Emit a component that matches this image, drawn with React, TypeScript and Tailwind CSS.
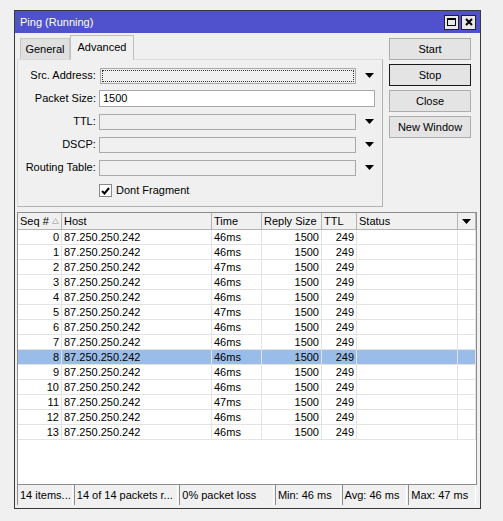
import React from "react";

const font = { fontFamily: '"Liberation Sans", Arial, sans-serif' };

const rows = [
  46, 46, 47, 46, 46, 47, 46, 46, 46, 46, 46, 47, 46, 46,
];

function Arrow() {
  return (
    <svg width="9" height="5" viewBox="0 0 9 5" className="block">
      <path d="M0 0h9L4.5 5z" fill="#000" />
    </svg>
  );
}

function FormRow({
  label,
  value,
  wide,
  focus,
}: {
  label: string;
  value?: string;
  wide?: boolean;
  focus?: boolean;
}) {
  return (
    <div className="flex items-center h-[17px]">
      <div className="w-[78px] text-right leading-none">{label}</div>
      {wide ? (
        <div className="ml-[3px] w-[276px] h-[17px] bg-white border border-[#a9a9a9] flex items-center pl-[3px] leading-none">
          {value}
        </div>
      ) : (
        <>
          <div
            className={
              focus
                ? "ml-[4px] w-[257px] h-[16px] bg-[#f0f0f0] border border-[#a9a9a9] p-px"
                : "ml-[3px] w-[258px] h-[16px] bg-[#f0f0f0] border border-[#a9a9a9]"
            }
          >
            {focus && (
              <div className="w-full h-full border border-dotted border-[#333]" />
            )}
          </div>
          <div className="w-[26px] flex justify-center">
            <Arrow />
          </div>
        </>
      )}
    </div>
  );
}

function Btn({ label, def }: { label: string; def?: boolean }) {
  return (
    <div
      className={
        def
          ? "w-[82px] h-[22px] border border-[#1a1a1a] bg-[#e4e4e4] flex items-center justify-center leading-none"
          : "w-[82px] h-[22px] border border-[#adadad] bg-[#e4e4e4] flex items-center justify-center leading-none"
      }
    >
      {label}
    </div>
  );
}

const cols = [
  "w-[44px]",
  "w-[150px]",
  "w-[50px]",
  "w-[60px]",
  "w-[35px]",
  "w-[101px]",
  "w-[18px]",
];

export default function App() {
  return (
    <div
      className="w-[503px] h-[521px] bg-[#f0f0f0] pl-[14px] pt-[10px] text-[11px] text-black"
      style={font}
    >
      <div className="w-[467px] h-[499px] border border-[#3a3a3a] bg-[#f0f0f0] flex flex-col">
        {/* title bar */}
        <div className="h-[22px] bg-[#4f52cc] flex items-center pl-[5px] pr-[4px]">
          <span className="text-white text-[11px] leading-none">Ping (Running)</span>
          <div className="ml-auto flex gap-[2px]">
            <div className="w-[15px] h-[15px] bg-[#e8e8e8] border border-[#222] flex items-center justify-center">
              <div className="w-[9px] h-[8px] border border-black border-t-2" />
            </div>
            <div className="w-[15px] h-[15px] bg-[#e8e8e8] border border-[#222] flex items-center justify-center">
              <svg width="8" height="8" viewBox="0 0 8 8">
                <path d="M1 1l6 6M7 1L1 7" stroke="#000" strokeWidth="2" />
              </svg>
            </div>
          </div>
        </div>

        {/* body */}
        <div className="flex-1 flex flex-col pl-[2px] pr-[3px] pb-[3px]">
          <div className="flex">
            <div className="w-[366px] flex flex-col pt-[2px]">
              <div className="flex items-end h-[25px] pl-[3px] relative z-10 -mb-px">
                <div className="w-[50px] h-[21px] bg-[#e0e0e0] border border-[#c8c8c8] border-b-0 flex items-center justify-center leading-none mb-px">
                  General
                </div>
                <div className="w-[64px] h-[25px] bg-[#f0f0f0] border border-[#c0c0c0] border-b-0 flex items-center justify-center leading-none pb-[2px]">
                  Advanced
                </div>
              </div>
              <div className="h-[148px] border border-[#b4b4b4] border-t-[#dcdcdc] border-l-[#dcdcdc] pt-[7px] flex flex-col gap-[6px]">
                <FormRow label="Src. Address:" focus />
                <FormRow label="Packet Size:" value="1500" wide />
                <FormRow label="TTL:" />
                <FormRow label="DSCP:" />
                <FormRow label="Routing Table:" />
                <div className="flex items-center mt-[2px] pl-[81px] h-[13px]">
                  <div className="w-[13px] h-[13px] bg-white border border-[#8a8a8a] flex items-center justify-center">
                    <svg width="9" height="8" viewBox="0 0 9 8">
                      <path d="M1 4l2.5 2.5L8 1" stroke="#000" strokeWidth="2" fill="none" />
                    </svg>
                  </div>
                  <span className="ml-[4px] leading-none">Dont Fragment</span>
                </div>
              </div>
            </div>
            <div className="ml-[6px] pt-[5px] flex flex-col gap-[4px]">
              <Btn label="Start" />
              <Btn label="Stop" def />
              <Btn label="Close" />
              <Btn label="New Window" />
            </div>
          </div>

          {/* table */}
          <div className="mt-[5px] w-[460px] flex-1 border border-[#8c8c8c] bg-white flex flex-col">
            <div className="h-[17px] flex bg-[#f0f0f0] border-b border-[#b4b4b4]">
              {["Seq #", "Host", "Time", "Reply Size", "TTL", "Status", ""].map((h, i) => (
                <div
                  key={i}
                  className={`${cols[i]} h-full border-r border-[#b4b4b4] flex items-center pl-[2px] leading-none`}
                >
                  {h}
                  {i === 0 && (
                    <svg width="7" height="6" viewBox="0 0 7 6" className="ml-[3px]">
                      <path d="M3.5 0.5L6.5 5.5H0.5z" fill="none" stroke="#b8b8b8" />
                    </svg>
                  )}
                  {i === 6 && (
                    <div className="ml-[2px]">
                      <Arrow />
                    </div>
                  )}
                </div>
              ))}
            </div>
            {rows.map((t, i) => {
              const cells = [
                String(i),
                "87.250.250.242",
                `${t}ms`,
                "1500",
                "249",
                "",
                "",
              ];
              return (
                <div
                  key={i}
                  className={
                    i === 8
                      ? "h-[15px] flex bg-[#99bde8] border-b border-[#e3e3e3]"
                      : "h-[15px] flex border-b border-[#e3e3e3]"
                  }
                >
                  {cells.map((c, j) => (
                    <div
                      key={j}
                      className={`${cols[j]} h-full border-r border-[#e3e3e3] flex items-center leading-none ${
                        j === 0 || j === 3 || j === 4
                          ? "justify-end pr-[2px]"
                          : "pl-[2px]"
                      }`}
                    >
                      {c}
                    </div>
                  ))}
                </div>
              );
            })}
          </div>

          {/* status bar */}
          <div className="h-[20px] flex items-stretch gap-[1px] mr-[1px]">
            {[
              ["14 items...", "w-[56px]"],
              ["14 of 14 packets r...", "w-[105px]"],
              ["0% packet loss", "w-[95px]"],
              ["Min: 46 ms", "w-[66px]"],
              ["Avg: 46 ms", "w-[66px]"],
              ["Max: 47 ms", "w-[68px]"],
            ].map(([txt, w]) => (
              <div
                key={txt}
                className={`${w} border-l border-[#8c8c8c] border-r border-r-white flex items-center pl-[2px] leading-none whitespace-nowrap overflow-hidden`}
              >
                {txt}
              </div>
            ))}
          </div>
        </div>
      </div>
    </div>
  );
}
